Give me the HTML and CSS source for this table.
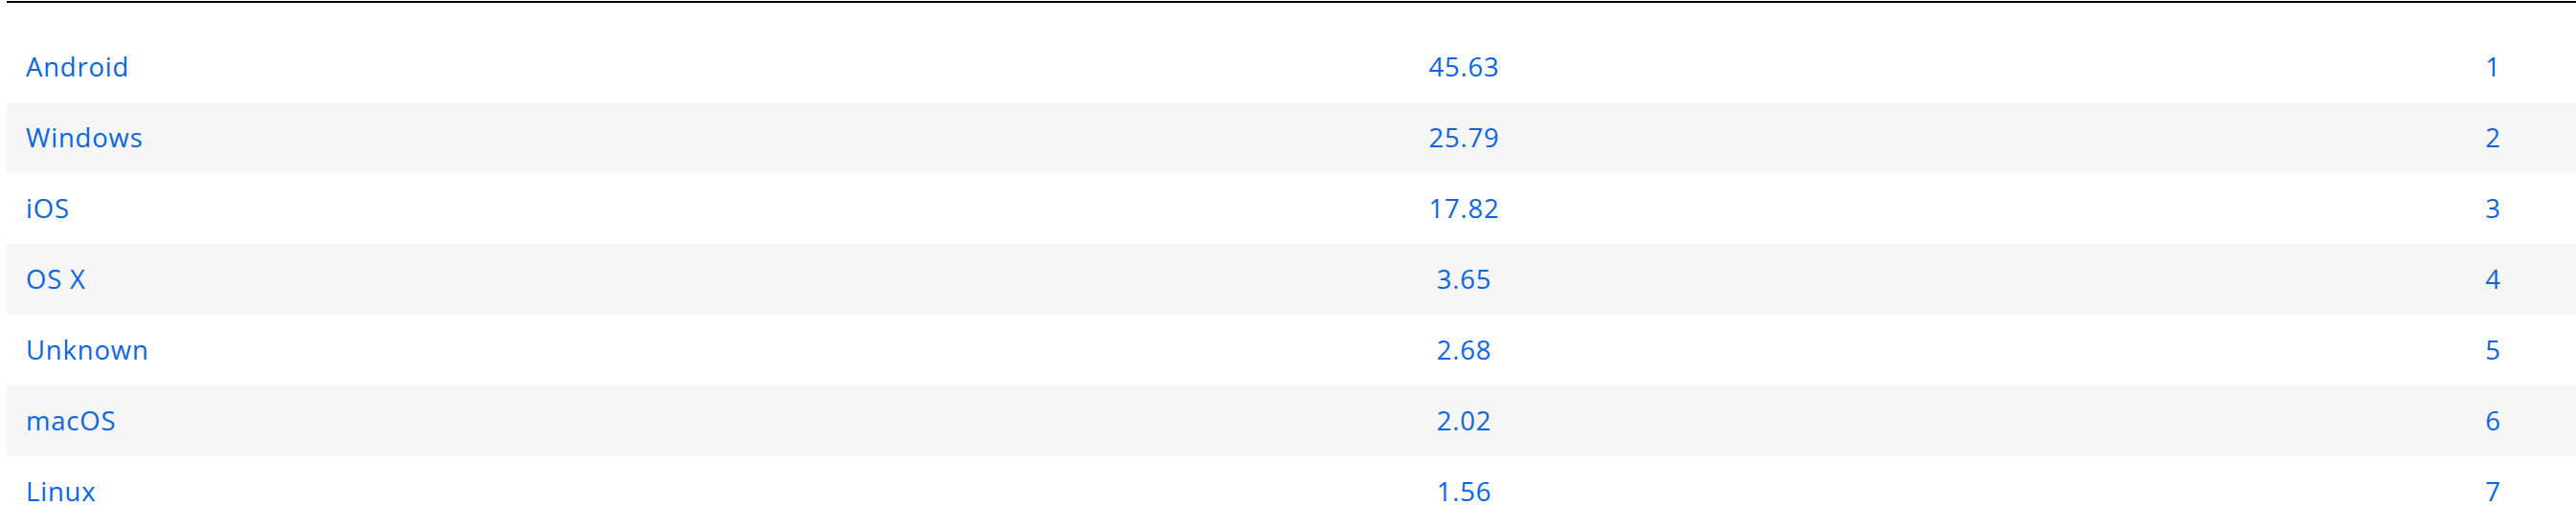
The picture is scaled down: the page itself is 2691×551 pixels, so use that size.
FILE: index.html
```html
<!DOCTYPE html>
<html>
<head>
<meta charset="utf-8">
<link rel="stylesheet" href="styles.css">
</head>
<body>
<div class="wrap">
  <div class="head-rule"></div>
  <table class="stats">
    <colgroup>
      <col class="c-name">
      <col class="c-share">
      <col class="c-rank">
    </colgroup>
    <tbody>
      <tr><td class="name">Android</td><td class="num">45.63</td><td class="num">1</td></tr>
      <tr><td class="name">Windows</td><td class="num">25.79</td><td class="num">2</td></tr>
      <tr><td class="name">iOS</td><td class="num">17.82</td><td class="num">3</td></tr>
      <tr><td class="name">OS X</td><td class="num">3.65</td><td class="num">4</td></tr>
      <tr><td class="name">Unknown</td><td class="num">2.68</td><td class="num">5</td></tr>
      <tr><td class="name">macOS</td><td class="num">2.02</td><td class="num">6</td></tr>
      <tr><td class="name">Linux</td><td class="num">1.56</td><td class="num">7</td></tr>
    </tbody>
  </table>
</div>
</body>
</html>
```
FILE: styles.css
```css
html, body {
  margin: 0;
  padding: 0;
  background: #fff;
}
body {
  font-family: "Open Sans", "Noto Sans", sans-serif;
  font-size: 27.5px;
  letter-spacing: 0.8px;
  color: #0b65e3;
  overflow: hidden;
}
.wrap {
  margin-left: 7px;
  padding-top: 1px;
}
.head-rule {
  height: 2px;
  background: #000;
  margin-bottom: 30px;
}
.stats {
  border-collapse: collapse;
  table-layout: fixed;
  width: 2684px;
}
.c-name { width: 534px; }
.c-share { width: 1977px; }
.c-rank { width: 173px; }
.stats td {
  height: 74px;
  padding: 0;
  vertical-align: middle;
  line-height: 1;
  white-space: nowrap;
}
.stats tr:nth-child(even) td {
  background: #f6f6f6;
}
.stats .name {
  padding-left: 20px;
  text-align: left;
}
.stats .num {
  text-align: center;
}
```
